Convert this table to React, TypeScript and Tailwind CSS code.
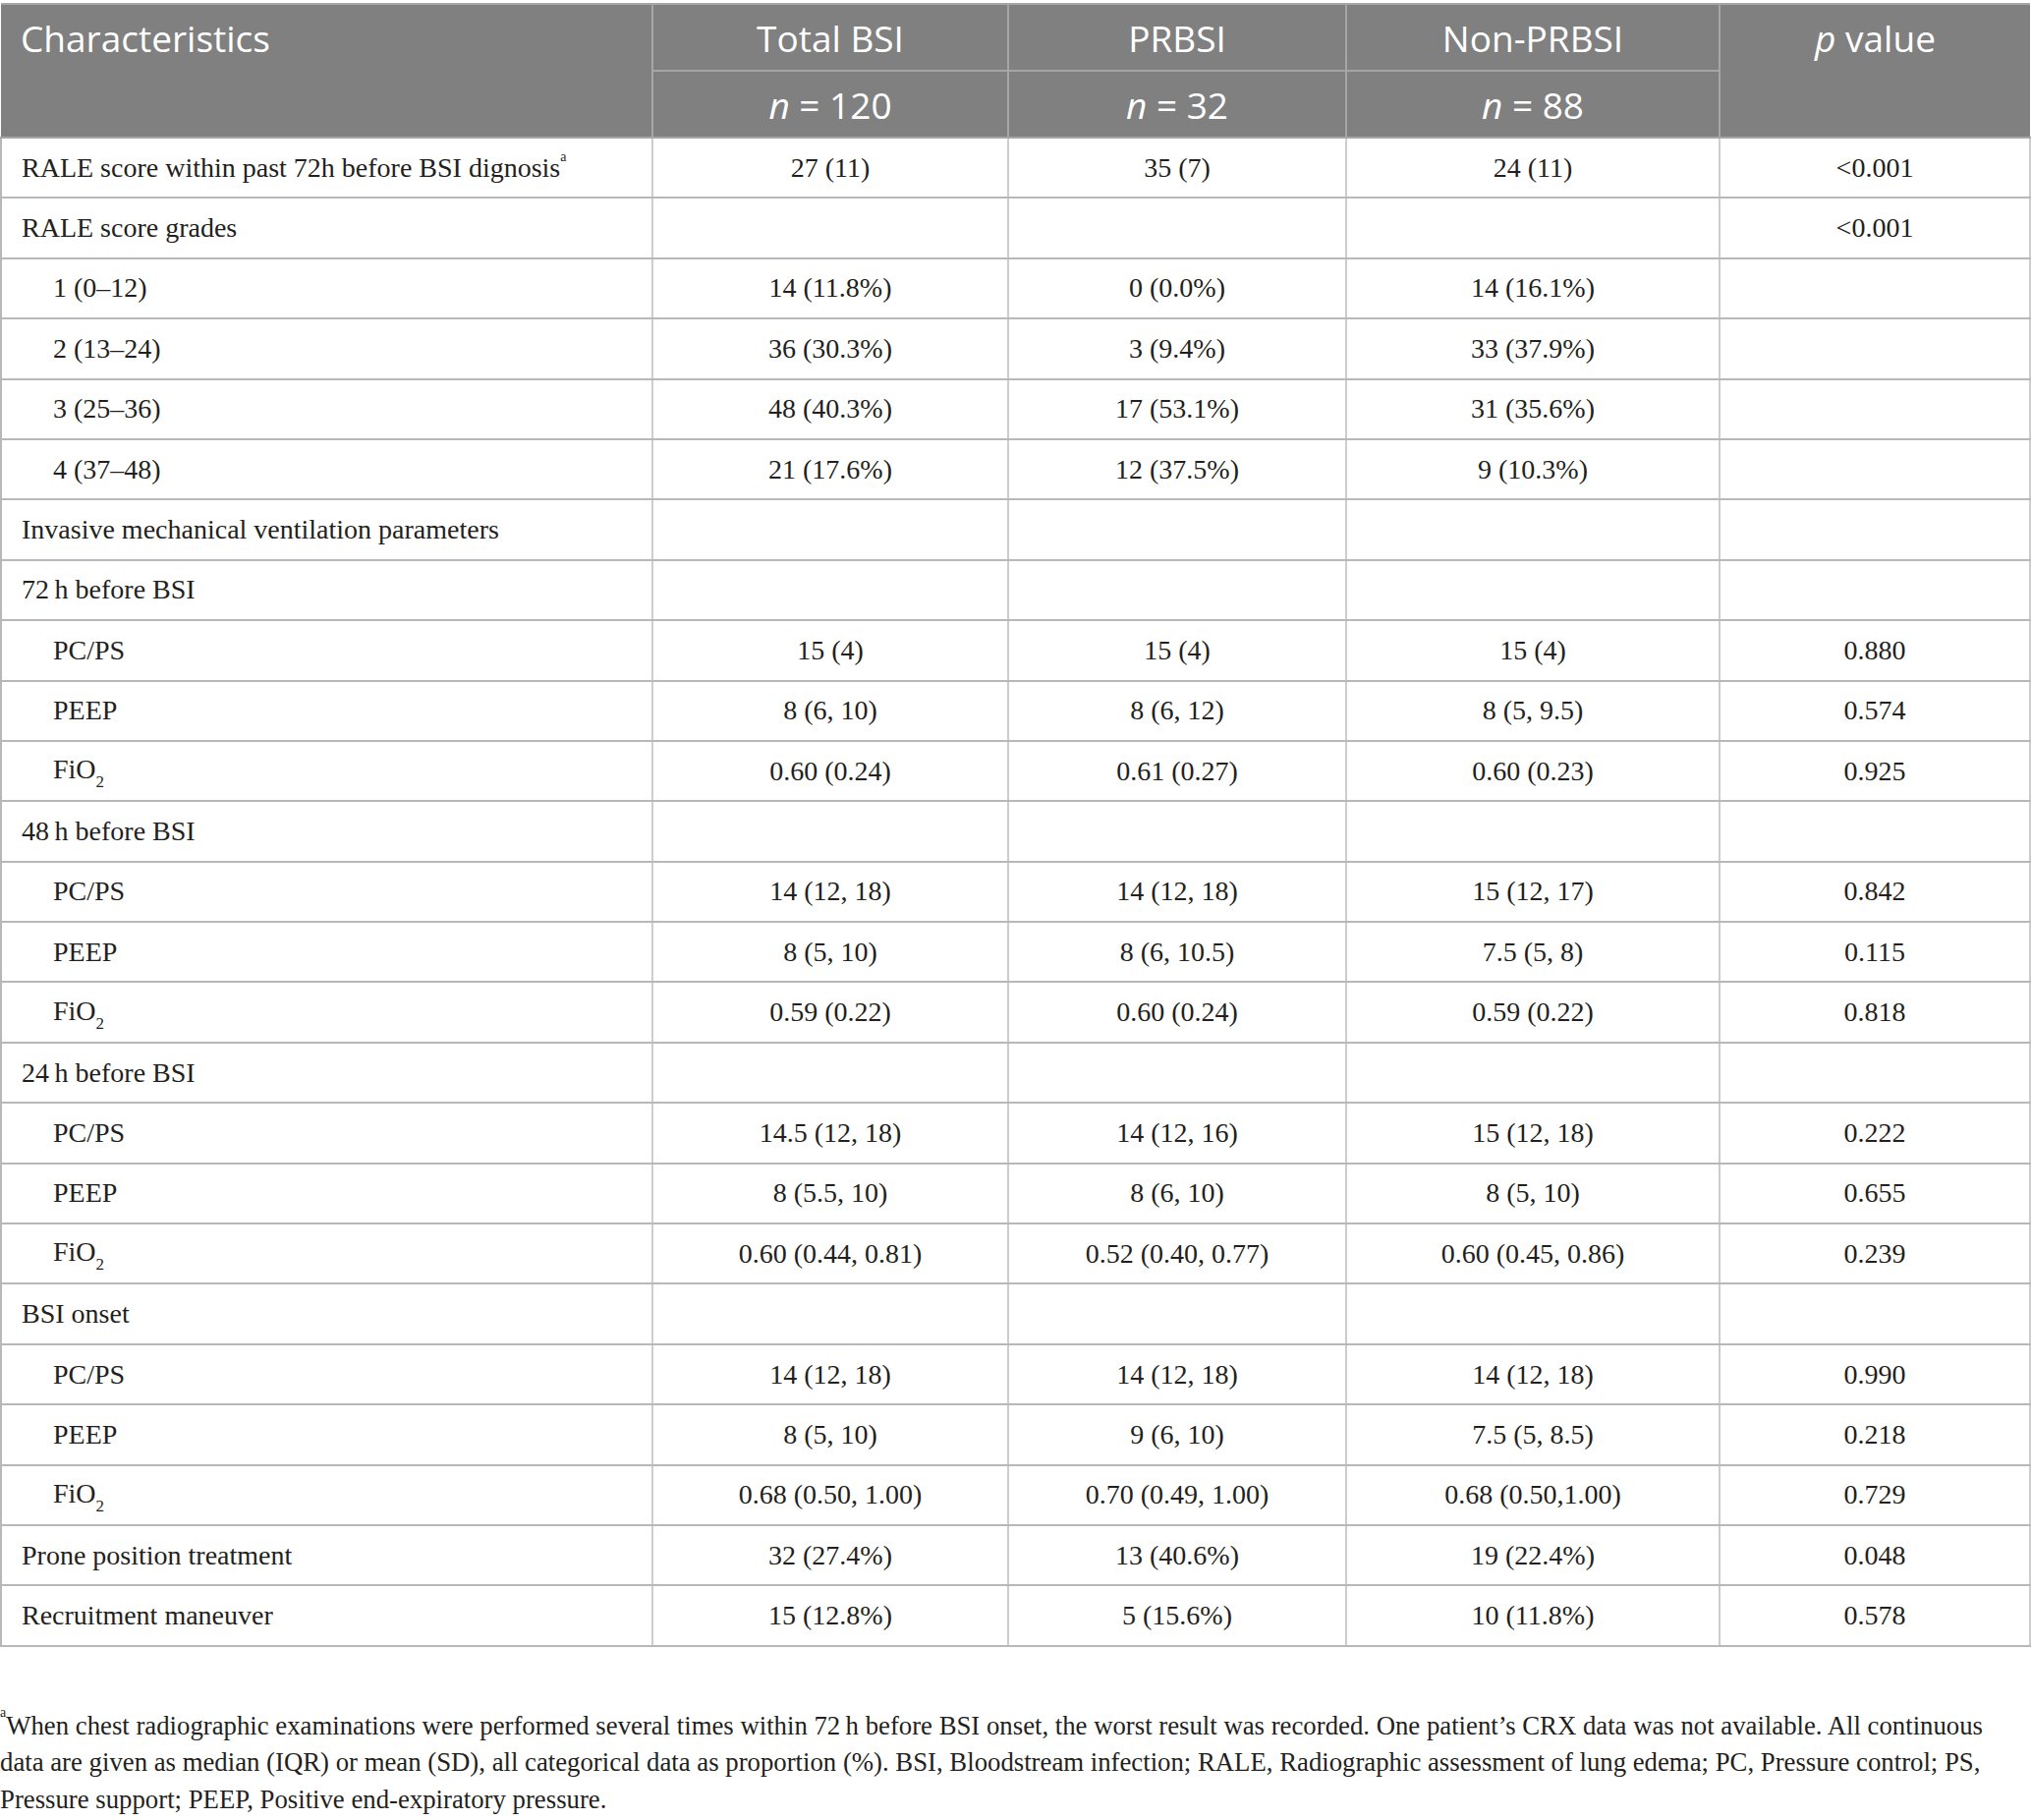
import React from "react";

type Row = { label: React.ReactNode; indent?: boolean; cells: string[] };

const Fi = () => (
  <span>
    FiO<sub className="text-[17px] align-[-5px] leading-none">2</sub>
  </span>
);

const rows: Row[] = [
  {
    label: (
      <span>
        RALE score within past 72h before BSI dignosis
        <sup className="text-[14px] align-[9px] leading-none">a</sup>
      </span>
    ),
    cells: ["27 (11)", "35 (7)", "24 (11)", "<0.001"],
  },
  { label: "RALE score grades", cells: ["", "", "", "<0.001"] },
  { label: "1 (0–12)", indent: true, cells: ["14 (11.8%)", "0 (0.0%)", "14 (16.1%)", ""] },
  { label: "2 (13–24)", indent: true, cells: ["36 (30.3%)", "3 (9.4%)", "33 (37.9%)", ""] },
  { label: "3 (25–36)", indent: true, cells: ["48 (40.3%)", "17 (53.1%)", "31 (35.6%)", ""] },
  { label: "4 (37–48)", indent: true, cells: ["21 (17.6%)", "12 (37.5%)", "9 (10.3%)", ""] },
  { label: "Invasive mechanical ventilation parameters", cells: ["", "", "", ""] },
  { label: "72\u2009h before BSI", cells: ["", "", "", ""] },
  { label: "PC/PS", indent: true, cells: ["15 (4)", "15 (4)", "15 (4)", "0.880"] },
  { label: "PEEP", indent: true, cells: ["8 (6, 10)", "8 (6, 12)", "8 (5, 9.5)", "0.574"] },
  { label: <Fi />, indent: true, cells: ["0.60 (0.24)", "0.61 (0.27)", "0.60 (0.23)", "0.925"] },
  { label: "48\u2009h before BSI", cells: ["", "", "", ""] },
  { label: "PC/PS", indent: true, cells: ["14 (12, 18)", "14 (12, 18)", "15 (12, 17)", "0.842"] },
  { label: "PEEP", indent: true, cells: ["8 (5, 10)", "8 (6, 10.5)", "7.5 (5, 8)", "0.115"] },
  { label: <Fi />, indent: true, cells: ["0.59 (0.22)", "0.60 (0.24)", "0.59 (0.22)", "0.818"] },
  { label: "24\u2009h before BSI", cells: ["", "", "", ""] },
  { label: "PC/PS", indent: true, cells: ["14.5 (12, 18)", "14 (12, 16)", "15 (12, 18)", "0.222"] },
  { label: "PEEP", indent: true, cells: ["8 (5.5, 10)", "8 (6, 10)", "8 (5, 10)", "0.655"] },
  { label: <Fi />, indent: true, cells: ["0.60 (0.44, 0.81)", "0.52 (0.40, 0.77)", "0.60 (0.45, 0.86)", "0.239"] },
  { label: "BSI onset", cells: ["", "", "", ""] },
  { label: "PC/PS", indent: true, cells: ["14 (12, 18)", "14 (12, 18)", "14 (12, 18)", "0.990"] },
  { label: "PEEP", indent: true, cells: ["8 (5, 10)", "9 (6, 10)", "7.5 (5, 8.5)", "0.218"] },
  { label: <Fi />, indent: true, cells: ["0.68 (0.50, 1.00)", "0.70 (0.49, 1.00)", "0.68 (0.50,1.00)", "0.729"] },
  { label: "Prone position treatment", cells: ["32 (27.4%)", "13 (40.6%)", "19 (22.4%)", "0.048"] },
  { label: "Recruitment maneuver", cells: ["15 (12.8%)", "5 (15.6%)", "10 (11.8%)", "0.578"] },
];

export default function App() {
  const hcell = "border-2 border-[#a6a6a6] bg-[#808080] text-white font-normal text-center";
  return (
    <div className="w-[2067px] bg-white pt-[3px] text-[#231f20]">
      <table className="w-[2067px] table-fixed border-collapse">
        <colgroup>
          <col className="w-[663px]" />
          <col className="w-[362px]" />
          <col className="w-[344px]" />
          <col className="w-[380px]" />
          <col />
        </colgroup>
        <thead className="font-['Open_Sans',sans-serif] text-[37px] leading-none">
          <tr className="h-[68px]">
            <th rowSpan={2} className={hcell + " align-top text-left pl-[20px] pt-[15px] border-l-0"}>
              Characteristics
            </th>
            <th className={hcell + " align-top pt-[15px]"}>Total BSI</th>
            <th className={hcell + " align-top pt-[15px]"}>PRBSI</th>
            <th className={hcell + " align-top pt-[15px]"}>Non-PRBSI</th>
            <th rowSpan={2} className={hcell + " align-top pt-[15px] border-r-0"}>
              <span className="italic">p</span> value
            </th>
          </tr>
          <tr className="h-[68px]">
            <th className={hcell + " align-middle"}>
              <span className="italic">n</span> = 120
            </th>
            <th className={hcell + " align-middle"}>
              <span className="italic">n</span> = 32
            </th>
            <th className={hcell + " align-middle"}>
              <span className="italic">n</span> = 88
            </th>
          </tr>
        </thead>
        <tbody className="font-['Liberation_Serif',serif] text-[28px] leading-none">
          {rows.map((r, i) => (
            <tr key={i} className="h-[61.4px]">
              <td
                className={
                  "border-y-2 border-y-[#b8b8b8] border-x-2 border-x-[#cdcdcd] border-l-[#b8b8b8] text-left " +
                  (r.indent ? "pl-[52px]" : "pl-[20px]")
                }
              >
                {r.label}
              </td>
              {r.cells.map((c, j) => (
                <td
                  key={j}
                  className="border-y-2 border-y-[#b8b8b8] border-x-2 border-x-[#cdcdcd] text-center"
                >
                  {c}
                </td>
              ))}
            </tr>
          ))}
        </tbody>
      </table>
      <div className="mt-[62px] font-['Liberation_Serif',serif] text-[26.75px] leading-[37.5px]">
        <p>
          <sup className="text-[14px] align-[11px] leading-none">a</sup>
          When chest radiographic examinations were performed several times within 72{"\u2009"}h before BSI onset,
          the worst result was recorded. One patient’s CRX data was not available. All continuous
          <br />
          data are given as median (IQR) or mean (SD), all categorical data as proportion (%). BSI, Bloodstream
          infection; RALE, Radiographic assessment of lung edema; PC, Pressure control; PS,
          <br />
          Pressure support; PEEP, Positive end-expiratory pressure.
        </p>
      </div>
    </div>
  );
}
